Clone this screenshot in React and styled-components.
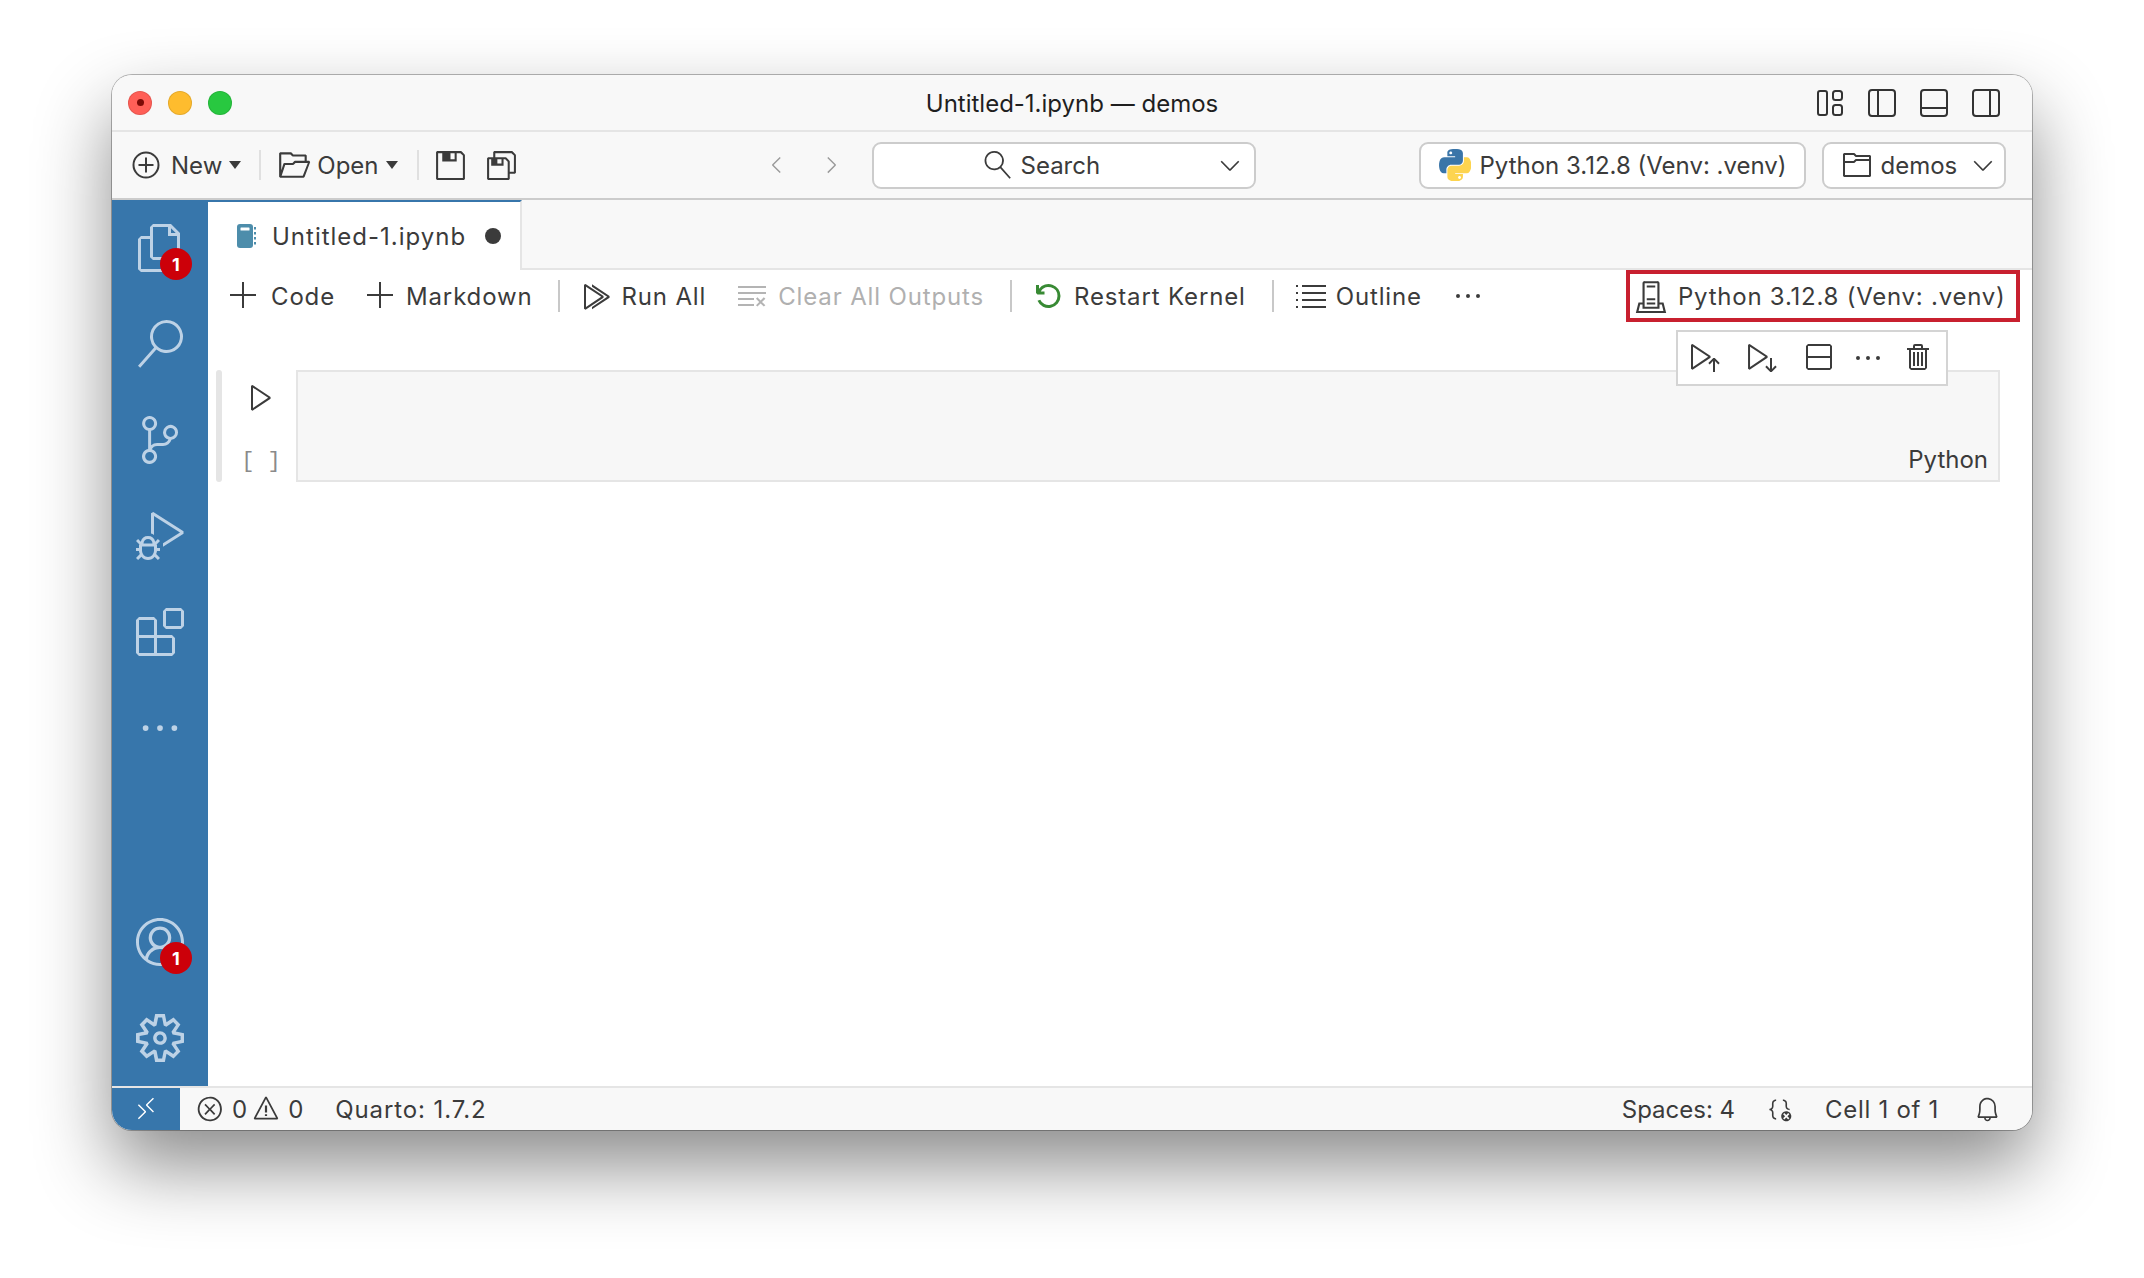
import React from "react";
import styled, { createGlobalStyle } from "styled-components";
import {
  VscAccount, VscAdd, VscBell, VscBracketError, VscChevronDown, VscChevronLeft, VscChevronRight,
  VscClearAll, VscDebugAlt, VscDebugRestart, VscEllipsis, VscError, VscExtensions, VscFiles,
  VscFolder, VscFolderOpened, VscPlay, VscRemote, VscRunAbove, VscRunAll, VscRunBelow, VscSave,
  VscSaveAll, VscSearch, VscServerEnvironment, VscSettingsGear, VscSourceControl, VscSplitVertical,
  VscTrash, VscWarning,
} from "react-icons/vsc";

const GlobalStyle = createGlobalStyle`
  html, body { margin: 0; padding: 0; background: #fff; }
  body { font-family: "Inter", "Liberation Sans", sans-serif; color: #3b3b3b; overflow: hidden; }
`;

const Page = styled.div`
  width: 2144px;
  height: 1278px;
  box-sizing: border-box;
  padding: 75px 112px 148px;
`;

const Window = styled.div`
  height: 100%;
  display: flex;
  flex-direction: column;
  border-radius: 20px;
  overflow: hidden;
  background: #fff;
  box-shadow: 0 0 0 1px rgba(0, 0, 0, 0.28), 0 36px 76px rgba(0, 0, 0, 0.46);
`;

const TitleBar = styled.div`
  height: 55px;
  flex: none;
  display: grid;
  grid-template-columns: 1fr auto 1fr;
  align-items: center;
  background: #f8f8f8;
  border-bottom: 2px solid #e5e5e5;
  padding: 0 16px;
`;

const Lights = styled.div`
  display: flex;
  gap: 16px;
`;

const Light = styled.span`
  width: 24px;
  height: 24px;
  border-radius: 50%;
  background: ${(p) => p.$color};
  box-shadow: inset 0 0 0 1px rgba(0, 0, 0, 0.1);
  display: flex;
  align-items: center;
  justify-content: center;
  &::after {
    content: "";
    width: 7px;
    height: 7px;
    border-radius: 50%;
    background: ${(p) => p.$dot || "transparent"};
  }
`;

const Title = styled.div`
  font-size: 24px;
  color: #1f1f1f;
  margin-top: 2px;
`;

const LayoutIcons = styled.div`
  display: flex;
  justify-content: flex-end;
  gap: 24px;
  color: #333;
  margin-right: 16px;
`;

const TopBar = styled.div`
  height: 66px;
  flex: none;
  display: flex;
  align-items: center;
  background: #f8f8f8;
  border-bottom: 2px solid #ccc;
  padding-left: 20px;
`;

const Glyph = styled.span`
  display: inline-flex;
  flex: none;
  font-size: ${(p) => p.$size || 30}px;
  color: ${(p) => p.$color || "#3b3b3b"};
  margin-left: ${(p) => p.$ml || 0}px;
  margin-right: ${(p) => p.$mr || 0}px;
  transform: ${(p) => (p.$flip ? "scaleX(-1)" : "none")};
`;

const Label = styled.span`
  font-size: 24px;
  white-space: nowrap;
  color: ${(p) => p.$color || "#3b3b3b"};
  margin-left: ${(p) => p.$ml || 0}px;
  margin-right: ${(p) => p.$mr || 0}px;
  letter-spacing: ${(p) => (p.$ls ? `${p.$ls}px` : "inherit")};
`;

const Caret = styled.span`
  width: 0;
  height: 0;
  border-left: 6px solid transparent;
  border-right: 6px solid transparent;
  border-top: 8px solid #3b3b3b;
  margin-left: 7px;
`;

const Divider = styled.span`
  width: 2px;
  height: ${(p) => p.$h || 30}px;
  background: ${(p) => p.$color || "#e0e0e0"};
  margin-left: ${(p) => p.$ml || 0}px;
  margin-right: ${(p) => p.$mr || 0}px;
`;

const Pill = styled.div`
  height: 47px;
  box-sizing: border-box;
  display: flex;
  align-items: center;
  background: #fff;
  border: 2px solid #ccc;
  border-radius: 9px;
  width: ${(p) => p.$w}px;
  margin-left: ${(p) => p.$ml || 0}px;
  padding-left: ${(p) => p.$pl || 0}px;
`;

const Body = styled.div`
  flex: 1;
  min-height: 0;
  display: flex;
`;

const ActivityBar = styled.div`
  width: 96px;
  flex: none;
  display: flex;
  flex-direction: column;
  background: #3776ab;
`;

const ActivityItem = styled.div`
  position: relative;
  height: 96px;
  display: flex;
  align-items: center;
  justify-content: center;
  color: #bdd2e6;
  margin-top: ${(p) => (p.$push ? "auto" : 0)};
`;

const Badge = styled.span`
  position: absolute;
  left: 48px;
  top: 48px;
  width: 32px;
  height: 32px;
  border-radius: 50%;
  background: #cc0009;
  color: #fff;
  font-size: 18px;
  font-weight: 700;
  display: flex;
  align-items: center;
  justify-content: center;
`;

const Main = styled.div`
  flex: 1;
  min-width: 0;
  display: flex;
  flex-direction: column;
`;

const TabStrip = styled.div`
  height: 70px;
  flex: none;
  box-sizing: border-box;
  display: flex;
  background: #f8f8f8;
  border-bottom: 2px solid #e5e5e5;
`;

const Tab = styled.div`
  width: 314px;
  height: 70px;
  box-sizing: border-box;
  display: flex;
  align-items: center;
  background: #fff;
  border-top: 2px solid #3776ab;
  border-right: 2px solid #e5e5e5;
  padding-left: 29px;
`;

const Dirty = styled.span`
  width: 16px;
  height: 16px;
  border-radius: 50%;
  background: #3b3b3b;
  margin-left: 19px;
`;

const NotebookBar = styled.div`
  height: 52px;
  flex: none;
  display: flex;
  align-items: center;
  padding-left: 20px;
  padding-right: 12px;
  letter-spacing: 0.85px;
`;

const KernelBox = styled.div`
  height: 52px;
  width: 394px;
  box-sizing: border-box;
  margin-left: auto;
  display: flex;
  align-items: center;
  padding-left: 4px;
  border: 4px solid #c8202f;
  letter-spacing: 0.76px;
`;

const CellRow = styled.div`
  position: relative;
  height: 112px;
  margin-top: 48px;
  display: flex;
  padding: 0 32px 0 8px;
`;

const CellBar = styled.div`
  width: 6px;
  flex: none;
  background: #e5e5e5;
  border-radius: 3px;
`;

const Gutter = styled.div`
  width: 74px;
  flex: none;
  box-sizing: border-box;
  display: flex;
  flex-direction: column;
  align-items: center;
  padding: 11px 0 0 4px;
`;

const ExecCount = styled.span`
  font-family: "Liberation Mono", monospace;
  font-size: 22px;
  color: #8a8a8a;
  margin-top: 36px;
  white-space: pre;
`;

const Editor = styled.div`
  flex: 1;
  box-sizing: border-box;
  background: #f7f7f7;
  border: 2px solid #e5e5e5;
  display: flex;
  align-items: flex-end;
  justify-content: flex-end;
  padding: 0 10px 6px 0;
`;

const CellToolbar = styled.div`
  position: absolute;
  top: -40px;
  left: 1468px;
  width: 272px;
  height: 56px;
  box-sizing: border-box;
  display: flex;
  align-items: center;
  background: #fff;
  border: 2px solid #d4d4d4;
  padding-left: 11px;
`;

const StatusBar = styled.div`
  height: 44px;
  flex: none;
  box-sizing: border-box;
  display: flex;
  align-items: center;
  background: #f8f8f8;
  border-top: 2px solid #e5e5e5;
  padding-right: 31px;
`;

const RemoteBlock = styled.div`
  width: 68px;
  align-self: stretch;
  display: flex;
  align-items: center;
  justify-content: center;
  background: #3776ab;
  color: #fff;
`;

const Spacer = styled.div`
  flex: 1;
`;

const LayoutIcon = ({ children }) => (
  <svg width="28" height="28" viewBox="0 0 28 28" fill="none" stroke="currentColor" strokeWidth="2">
    {children}
  </svg>
);

const PlusCircle = () => (
  <svg width="28" height="28" viewBox="0 0 28 28" fill="none" stroke="#3b3b3b" strokeWidth="2">
    <circle cx="14" cy="14" r="12.5" />
    <path d="M14 6.5v15M6.5 14h15" />
  </svg>
);

const NotebookIcon = () => (
  <svg width="20" height="24" viewBox="0 0 20 24">
    <rect x="0" y="0" width="16" height="24" rx="3" fill="#4d8dab" />
    <rect x="3.5" y="3.5" width="9" height="3" rx="0.5" fill="#fff" />
    <path d="M18 3v2.5M18 8v2.5M18 13v2.5M18 18v2.5" stroke="#4d8dab" strokeWidth="2" />
  </svg>
);

const OutlineIcon = () => (
  <svg width="30" height="26" viewBox="0 0 30 26" fill="none" stroke="#3b3b3b" strokeWidth="2">
    <path d="M6 3h24M6 10h24M6 17h24M6 24h24" />
    <path d="M0 3h2M0 10h2M0 17h2M0 24h2" />
  </svg>
);

const PythonLogo = () => (
  <svg width="32" height="32" viewBox="0 0 110 110">
    <path
      fill="#3a75a8"
      fillRule="evenodd"
      d="M54.9 0c-4.58.02-8.95.41-12.8 1.09C30.8 3.08 28.7 7.26 28.7 14.98v10.19h26.78v3.4H18.65c-7.78 0-14.6 4.68-16.73 13.58-2.46 10.2-2.57 16.57 0 27.22 1.9 7.93 6.45 13.58 14.23 13.58h9.2V70.71c0-8.84 7.65-16.64 16.73-16.64h26.74c7.44 0 13.39-6.13 13.39-13.6V14.98c0-7.26-6.12-12.71-13.39-13.92C64.25.31 59.48-.02 54.9 0zM40.43 8.21c2.77 0 5.02 2.29 5.02 5.12 0 2.82-2.25 5.09-5.02 5.09-2.78 0-5.02-2.27-5.02-5.09 0-2.83 2.24-5.12 5.02-5.12z"
    />
    <path
      fill="#fdd44f"
      fillRule="evenodd"
      d="M85.64 28.57v11.89c0 9.22-7.82 16.98-16.73 16.98H42.17c-7.32 0-13.39 6.27-13.39 13.6v25.49c0 7.26 6.31 11.52 13.39 13.6 8.48 2.49 16.61 2.94 26.74 0 6.74-1.95 13.39-5.88 13.39-13.6V86.34H55.56v-3.4h40.13c7.78 0 10.68-5.43 13.39-13.58 2.8-8.39 2.68-16.46 0-27.22-1.92-7.75-5.6-13.58-13.39-13.58H85.64zM70.6 93.11c2.78 0 5.02 2.27 5.02 5.09 0 2.83-2.24 5.12-5.02 5.12-2.77 0-5.02-2.29-5.02-5.12 0-2.82 2.25-5.09 5.02-5.09z"
    />
  </svg>
);

export default function App() {
  return (
    <Page>
      <GlobalStyle />
      <Window>
        <TitleBar>
          <Lights>
            <Light $color="#ff5f57" $dot="#7d0a06" />
            <Light $color="#febc2e" />
            <Light $color="#28c840" />
          </Lights>
          <Title>Untitled-1.ipynb — demos</Title>
          <LayoutIcons>
            <LayoutIcon>
              <rect x="2" y="2" width="9" height="24" rx="2" />
              <rect x="17" y="2" width="9" height="9" rx="2.5" />
              <rect x="17" y="16" width="9" height="10" rx="2.5" />
            </LayoutIcon>
            <LayoutIcon>
              <rect x="1" y="1" width="26" height="26" rx="3" />
              <path d="M10 1v26" />
            </LayoutIcon>
            <LayoutIcon>
              <rect x="1" y="1" width="26" height="26" rx="3" />
              <path d="M1 19h26" />
            </LayoutIcon>
            <LayoutIcon>
              <rect x="1" y="1" width="26" height="26" rx="3" />
              <path d="M18 1v26" />
            </LayoutIcon>
          </LayoutIcons>
        </TitleBar>

        <TopBar>
          <PlusCircle />
          <Label $ml={11}>New</Label>
          <Caret />
          <Divider $ml={18} $mr={16} />
          <Glyph $size={34}><VscFolderOpened /></Glyph>
          <Label $ml={6}>Open</Label>
          <Caret />
          <Divider $ml={19} $mr={15} />
          <Glyph $size={33}><VscSave /></Glyph>
          <Glyph $size={33} $ml={18}><VscSaveAll /></Glyph>
          <Glyph $size={26} $color="#9a9a9a" $ml={246}><VscChevronLeft /></Glyph>
          <Glyph $size={26} $color="#9a9a9a" $ml={28}><VscChevronRight /></Glyph>
          <Pill $w={384} $ml={28} $pl={110}>
            <Glyph $size={28} $flip><VscSearch /></Glyph>
            <Label $ml={9}>Search</Label>
            <Glyph $size={30} $ml={115}><VscChevronDown /></Glyph>
          </Pill>
          <Pill $w={387} $ml={163} $pl={18}>
            <PythonLogo />
            <Label $ml={9}>Python 3.12.8 (Venv: .venv)</Label>
          </Pill>
          <Pill $w={184} $ml={16} $pl={17}>
            <Glyph $size={32}><VscFolder /></Glyph>
            <Label $ml={8}>demos</Label>
            <Glyph $size={30} $ml={11}><VscChevronDown /></Glyph>
          </Pill>
        </TopBar>

        <Body>
          <ActivityBar>
            <ActivityItem>
              <Glyph $size={48} $color="inherit"><VscFiles /></Glyph>
              <Badge>1</Badge>
            </ActivityItem>
            <ActivityItem>
              <Glyph $size={48} $color="inherit"><VscSearch /></Glyph>
            </ActivityItem>
            <ActivityItem>
              <Glyph $size={48} $color="inherit"><VscSourceControl /></Glyph>
            </ActivityItem>
            <ActivityItem>
              <Glyph $size={48} $color="inherit"><VscDebugAlt /></Glyph>
            </ActivityItem>
            <ActivityItem>
              <Glyph $size={48} $color="inherit"><VscExtensions /></Glyph>
            </ActivityItem>
            <ActivityItem>
              <Glyph $size={46} $color="inherit"><VscEllipsis /></Glyph>
            </ActivityItem>
            <ActivityItem $push>
              <Glyph $size={48} $color="inherit"><VscAccount /></Glyph>
              <Badge>1</Badge>
            </ActivityItem>
            <ActivityItem>
              <Glyph $size={48} $color="inherit"><VscSettingsGear /></Glyph>
            </ActivityItem>
          </ActivityBar>

          <Main>
            <TabStrip>
              <Tab>
                <NotebookIcon />
                <Label $ml={15} $ls={1}>Untitled-1.ipynb</Label>
                <Dirty />
              </Tab>
            </TabStrip>

            <NotebookBar>
              <Glyph $size={32}><VscAdd /></Glyph>
              <Label $ml={11}>Code</Label>
              <Glyph $size={32} $ml={30}><VscAdd /></Glyph>
              <Label $ml={9}>Markdown</Label>
              <Divider $h={32} $color="#c8c8c8" $ml={25} $mr={20} />
              <Glyph $size={32}><VscRunAll /></Glyph>
              <Label $ml={10}>Run All</Label>
              <Glyph $size={32} $color="#b4b4b4" $ml={30}><VscClearAll /></Glyph>
              <Label $color="#b0b0b0" $ml={10}>Clear All Outputs</Label>
              <Divider $h={32} $color="#c8c8c8" $ml={26} $mr={20} />
              <Glyph $size={32} $color="#388a34"><VscDebugRestart /></Glyph>
              <Label $ml={10}>Restart Kernel</Label>
              <Divider $h={32} $color="#c8c8c8" $ml={26} $mr={22} />
              <OutlineIcon />
              <Label $ml={10}>Outline</Label>
              <Glyph $size={32} $ml={30}><VscEllipsis /></Glyph>
              <KernelBox>
                <Glyph $size={34}><VscServerEnvironment /></Glyph>
                <Label $ml={10}>Python 3.12.8 (Venv: .venv)</Label>
              </KernelBox>
            </NotebookBar>

            <CellRow>
              <CellBar />
              <Gutter>
                <Glyph $size={32}><VscPlay /></Glyph>
                <ExecCount>[ ]</ExecCount>
              </Gutter>
              <Editor>
                <Label>Python</Label>
              </Editor>
              <CellToolbar>
                <Glyph $size={32}><VscRunAbove /></Glyph>
                <Glyph $size={32} $ml={25}><VscRunBelow /></Glyph>
                <Glyph $size={32} $ml={24}><VscSplitVertical /></Glyph>
                <Glyph $size={32} $ml={18}><VscEllipsis /></Glyph>
                <Glyph $size={32} $ml={19}><VscTrash /></Glyph>
              </CellToolbar>
            </CellRow>
          </Main>
        </Body>

        <StatusBar>
          <RemoteBlock>
            <Glyph $size={26} $color="inherit"><VscRemote /></Glyph>
          </RemoteBlock>
          <Glyph $size={28} $ml={16}><VscError /></Glyph>
          <Label $ml={8}>0</Label>
          <Glyph $size={28} $ml={5}><VscWarning /></Glyph>
          <Label $ml={8}>0</Label>
          <Label $ml={32} $ls={0.9}>Quarto: 1.7.2</Label>
          <Spacer />
          <Label>Spaces: 4</Label>
          <Glyph $size={27} $ml={31}><VscBracketError /></Glyph>
          <Label $ml={32} $ls={0.7}>Cell 1 of 1</Label>
          <Glyph $size={27} $ml={35}><VscBell /></Glyph>
        </StatusBar>
      </Window>
    </Page>
  );
}
